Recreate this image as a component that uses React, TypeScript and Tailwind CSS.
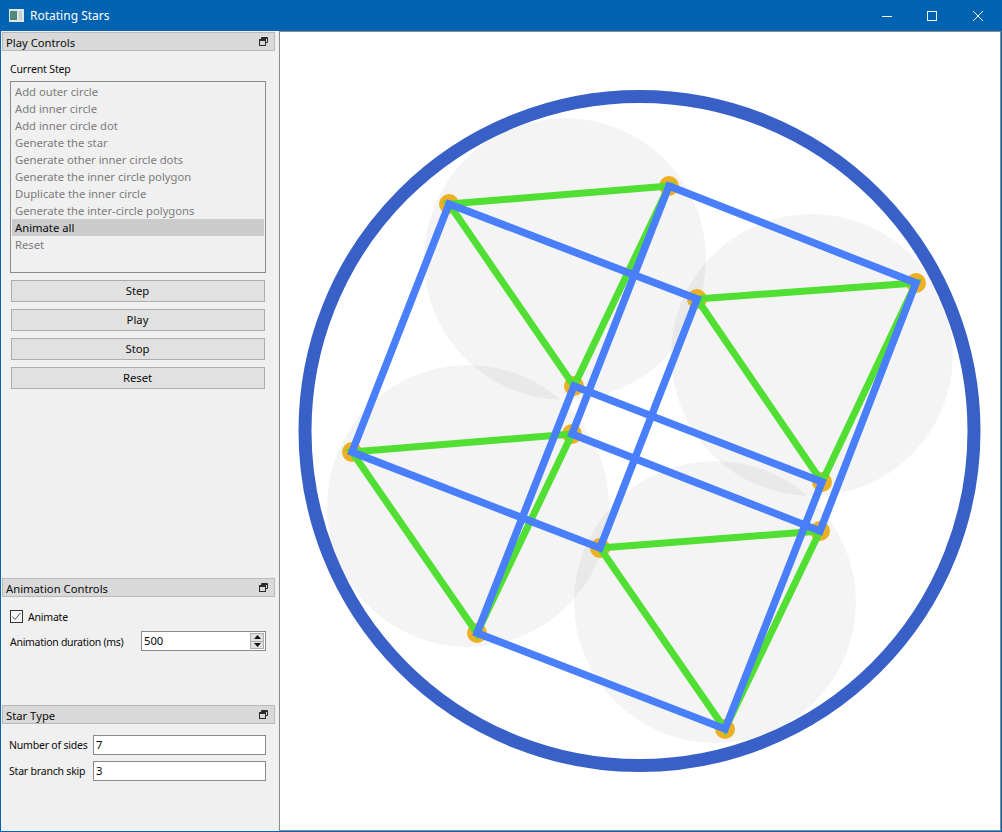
const STEPS = [
  "Add outer circle",
  "Add inner circle",
  "Add inner circle dot",
  "Generate the star",
  "Generate other inner circle dots",
  "Generate the inner circle polygon",
  "Duplicate the inner circle",
  "Generate the inter-circle polygons",
  "Animate all",
  "Reset",
];

const BUTTONS = ["Step", "Play", "Stop", "Reset"];

const CIRCLES = [
  { x: 565, y: 259 },
  { x: 812, y: 355 },
  { x: 468, y: 506 },
  { x: 715, y: 602 },
];

// triangle corners for each inner circle
const CORNERS = [
  [[449, 204], [669, 186], [574, 386]],
  [[697, 299], [916, 283], [822, 482]],
  [[352, 452], [572, 434], [477, 633]],
  [[600, 548], [820, 531], [725, 729]],
];

const pts = (list: number[][]) => list.map((p) => p.join(",")).join(" ");

function FloatIcon() {
  return (
    <svg width="9" height="9" viewBox="0 0 9 9" fill="none" stroke="#2b2b2b" strokeWidth="1">
      <path d="M2.5 2.5V0.5H8.5V5.5H6" />
      <rect x="0.5" y="2.5" width="6" height="6" />
      <path d="M1 3.5H6M3 1.5H8" />
    </svg>
  );
}

function DockHeader({ title }: { title: string }) {
  return (
    <div className="flex h-[19px] w-[273px] shrink-0 items-center justify-between border border-[#b9b9b9] bg-[#d9d9d9] pl-[3px] pr-[6px]">
      <span className="pt-[2px]">{title}</span>
      <FloatIcon />
    </div>
  );
}

function Field({ label, value }: { label: string; value: string }) {
  return (
    <div className="flex h-[20px] items-center justify-between">
      <span className="whitespace-nowrap text-[10.5px] tracking-[-0.2px]">{label}</span>
      <div className="flex h-[20px] w-[173px] shrink-0 items-center border border-[#8a8a8a] bg-white pl-[2px]">{value}</div>
    </div>
  );
}

function Canvas() {
  return (
    <svg className="block h-full w-full" viewBox="280 32 720 798">
      <circle cx="639.5" cy="431" r="334.5" fill="none" stroke="#3860c6" strokeWidth="13" />
      {CIRCLES.map((c, i) => (
        <circle key={i} cx={c.x} cy={c.y} r="141" fill="#000" fillOpacity="0.045" />
      ))}
      {CORNERS.flat().map((p, i) => (
        <circle key={i} cx={p[0]} cy={p[1]} r="10" fill="#ecb022" />
      ))}
      {CORNERS.map((t, i) => (
        <polygon key={i} points={pts(t)} fill="none" stroke="#50df32" strokeWidth="7" />
      ))}
      {[0, 1, 2].map((k) => (
        <polygon
          key={k}
          points={pts([CORNERS[0][k], CORNERS[1][k], CORNERS[3][k], CORNERS[2][k]])}
          fill="none"
          stroke="#4a7ffc"
          strokeWidth="7.5"
        />
      ))}
    </svg>
  );
}

export default function App() {
  return (
    <div className="flex h-[832px] w-[1002px] flex-col overflow-hidden bg-[#0063b1] px-[1px] pb-[1px] font-['Noto_Sans','Liberation_Sans',sans-serif] text-[11.25px] leading-none text-[#0a0a0a]">
      {/* title bar */}
      <div className="flex h-[31px] shrink-0 items-center text-white">
        <svg className="ml-[8px]" width="15" height="13" viewBox="0 0 15 13">
          <rect width="15" height="13" fill="#dfe6e6" />
          <rect x="1" y="2" width="7" height="9" fill="#4f8a78" />
          <rect x="10" y="2" width="3" height="9" fill="#c5ced2" />
        </svg>
        <span className="ml-[6px] text-[12px]">Rotating Stars</span>
        <div className="ml-auto flex items-center">
          <svg className="mr-[35px]" width="10" height="10" viewBox="0 0 10 10" stroke="#fff">
            <path d="M0 5.5H10" />
          </svg>
          <svg className="mr-[36px]" width="10" height="10" viewBox="0 0 10 10" fill="none" stroke="#fff">
            <rect x="0.5" y="0.5" width="9" height="9" />
          </svg>
          <svg className="mr-[18px]" width="10" height="10" viewBox="0 0 10 10" stroke="#fff">
            <path d="M0 0L10 10M10 0L0 10" />
          </svg>
        </div>
      </div>

      <div className="flex min-h-0 flex-1">
        {/* side docks */}
        <div className="flex w-[278px] shrink-0 flex-col bg-[#f0f0f0] pl-[1px] pt-[1px]">
          <div className="flex h-[546px] shrink-0 flex-col">
            <DockHeader title="Play Controls" />
            <div className="pl-[8px] pr-[13px]">
              <div className="flex h-[30px] items-end pb-[7px] text-[10.5px] tracking-[-0.15px]">Current Step</div>
              <div className="flex h-[192px] flex-col border border-[#8a8a8f] p-[1px] text-[#7c7c7c]">
                {STEPS.map((s) => (
                  <div
                    key={s}
                    className={`flex h-[17px] shrink-0 items-center pl-[3px] ${s === "Animate all" ? "bg-[#cbcbcb] text-[#0a0a0a]" : ""}`}
                  >
                    {s}
                  </div>
                ))}
              </div>
              <div className="mt-[7px] flex flex-col gap-[7px] px-[1px]">
                {BUTTONS.map((b) => (
                  <div key={b} className="flex h-[22px] items-center justify-center border border-[#adadad] bg-[#e1e1e1] pr-[1px]">
                    {b}
                  </div>
                ))}
              </div>
            </div>
          </div>

          <div className="flex h-[127px] shrink-0 flex-col">
            <DockHeader title="Animation Controls" />
            <div className="pl-[8px] pr-[13px]">
              <div className="mt-[13px] flex h-[13px] items-center gap-[5px]">
                <svg width="13" height="13" viewBox="0 0 13 13" fill="none">
                  <rect x="0.5" y="0.5" width="12" height="12" fill="#f6f6f6" stroke="#333" />
                  <path d="M2.5 6.5L5 9.5L10.5 3" stroke="#555" />
                </svg>
                <span className="pt-[2px] text-[10.5px] tracking-[-0.2px]">Animate</span>
              </div>
              <div className="mt-[8px] flex h-[20px] items-center justify-between">
                <span className="whitespace-nowrap pt-[2px] text-[10.5px] tracking-[-0.28px]">Animation duration (ms)</span>
                <div className="flex h-[20px] w-[125px] shrink-0 items-center justify-between border border-[#8a8a8a] bg-white pl-[2px] pr-[1px]">
                  <span>500</span>
                  <div className="flex h-[16px] w-[14px] flex-col border border-[#adadad] bg-[#e1e1e1]">
                    <div className="flex flex-1 items-center justify-center border-b border-[#adadad]">
                      <svg width="7" height="4" viewBox="0 0 7 4"><path d="M3.5 0L7 4H0Z" fill="#111" /></svg>
                    </div>
                    <div className="flex flex-1 items-center justify-center">
                      <svg width="7" height="4" viewBox="0 0 7 4"><path d="M0 0H7L3.5 4Z" fill="#111" /></svg>
                    </div>
                  </div>
                </div>
              </div>
            </div>
          </div>

          <div className="flex flex-1 flex-col">
            <DockHeader title="Star Type" />
            <div className="mt-[11px] flex flex-col gap-[6px] pl-[7px] pr-[13px]">
              <Field label="Number of sides" value="7" />
              <Field label="Star branch skip" value="3" />
            </div>
          </div>
        </div>

        {/* canvas */}
        <div className="min-w-0 flex-1 border border-[#8a8a8f] bg-white">
          <Canvas />
        </div>
      </div>
    </div>
  );
}
